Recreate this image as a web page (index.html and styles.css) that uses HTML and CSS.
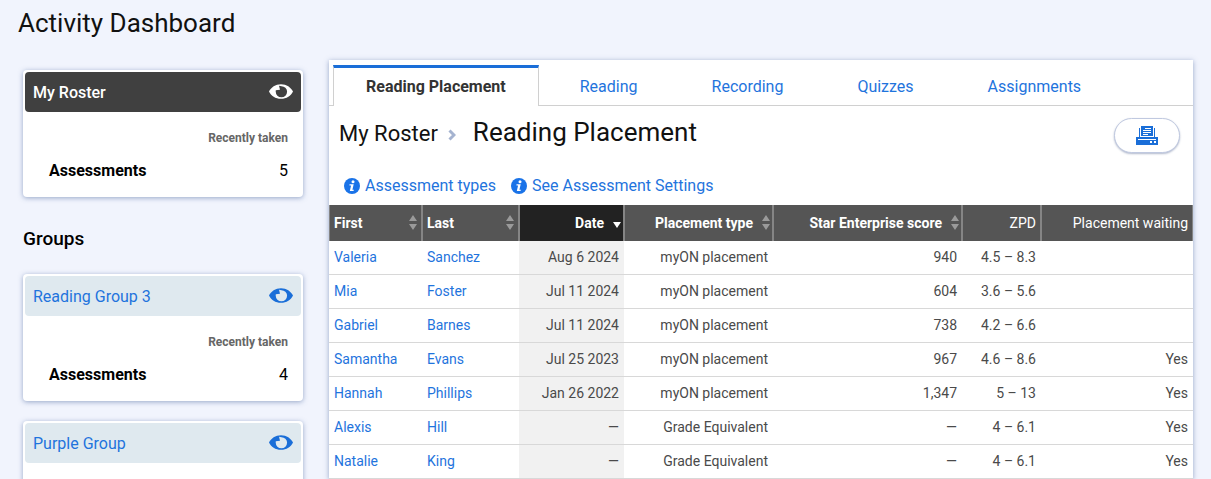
FILE: index.html
```html
<!DOCTYPE html>
<html lang="en">

<head>
  <meta charset="UTF-8">
  <meta name="viewport" content="width=device-width, initial-scale=1.0">
  <title>Activity Dashboard</title>
  <link rel="stylesheet" href="styles.css">
</head>

<body>
  <!-- shared icons -->
  <svg class="sprite" aria-hidden="true">
    <symbol id="eye" viewBox="0 0 24 16">
      <path fill-rule="evenodd" d="M0 7.500C2 3.300 6.500 .2 12 .2S22 3.300 24 7.500c-2 4.400-6.500 7.300-12 7.300S2 11.900 0 7.500zM12.500 2.200L10 1.800 11 5.800 6.800 6.200C6.700 6.700 6.700 7.100 6.700 7.600a5.700 5.700 0 1 0 11.400 0a5.600 5.600 0 0 0-5.600-5.400z"/>
    </symbol>
    <symbol id="info" viewBox="0 0 16 16">
      <circle cx="8" cy="8" r="8" fill="#1a73e8"/>
      <circle cx="9" cy="3.700" r="1.500" fill="#fff"/>
      <path d="M5.500 6.300h4.200l-1.300 5.500h1.500l-.4 1.300H5.800l1.300-5.500H5.500z" fill="#fff"/>
    </symbol>
    <symbol id="sort" viewBox="0 0 8 16">
      <path d="M4 0l4 6H0zM4 15l4-6H0z"/>
    </symbol>
  </svg>

  <h1 class="page-title">Activity Dashboard</h1>

  <div class="layout">
    <aside class="sidebar">
      <section class="card">
        <a href="#" class="card-head active">My Roster
          <svg class="eye"><use href="#eye"/></svg>
        </a>
        <div class="card-body">
          <p class="recent">Recently taken</p>
          <p class="stat"><b>Assessments</b><span>5</span></p>
        </div>
      </section>

      <h2 class="groups-title">Groups</h2>

      <section class="card">
        <a href="#" class="card-head">Reading Group 3
          <svg class="eye"><use href="#eye"/></svg>
        </a>
        <div class="card-body">
          <p class="recent">Recently taken</p>
          <p class="stat"><b>Assessments</b><span>4</span></p>
        </div>
      </section>

      <section class="card">
        <a href="#" class="card-head">Purple Group
          <svg class="eye"><use href="#eye"/></svg>
        </a>
        <div class="card-body"></div>
      </section>
    </aside>

    <main class="panel">
      <nav class="tabs">
        <a href="#" class="tab current">Reading Placement</a>
        <a href="#" class="tab">Reading</a>
        <a href="#" class="tab">Recording</a>
        <a href="#" class="tab">Quizzes</a>
        <a href="#" class="tab">Assignments</a>
      </nav>

      <div class="heading">
        <span class="crumb">My Roster</span>
        <svg class="chevron" viewBox="0 0 8 12"><path d="M1.500 1.500L6 6l-4.500 4.500"/></svg>
        <h2>Reading Placement</h2>
        <button class="print-btn" aria-label="Print">
          <svg viewBox="0 0 22 19" shape-rendering="crispEdges">
            <path fill="#1a6ed8" d="M5 0h12v10H5zM3 2h1v9H3zM18 2h1v9h-1zM0 11h22v8H0z"/>
            <path fill="#fff" d="M9 2h6v1H9zM7 4h8v1H7zM7 6h8v1H7zM7 8h5v1H7zM2 13h18v1H2zM14 15h2v2h-2zM18 15h2v2h-2z"/>
          </svg>
        </button>
      </div>

      <div class="info-links">
        <a href="#"><svg><use href="#info"/></svg>Assessment types</a>
        <a href="#"><svg><use href="#info"/></svg>See Assessment Settings</a>
      </div>

      <table>
        <colgroup>
          <col class="c-first">
          <col class="c-last">
          <col class="c-date">
          <col class="c-type">
          <col class="c-score">
          <col class="c-zpd">
          <col class="c-wait">
        </colgroup>
        <thead>
          <tr>
            <th class="left"><span class="th-in">First<svg class="sort"><use href="#sort"/></svg></span></th>
            <th class="left"><span class="th-in">Last<svg class="sort"><use href="#sort"/></svg></span></th>
            <th class="sorted"><span class="th-in">Date<svg class="down" viewBox="0 0 8 10"><path d="M0 4h8L4 10z"/></svg></span></th>
            <th><span class="th-in">Placement type<svg class="sort"><use href="#sort"/></svg></span></th>
            <th><span class="th-in">Star Enterprise score<svg class="sort"><use href="#sort"/></svg></span></th>
            <th class="plain">ZPD</th>
            <th class="plain">Placement waiting</th>
          </tr>
        </thead>
        <tbody>
          <tr>
            <td><a href="#">Valeria</a></td>
            <td><a href="#">Sanchez</a></td>
            <td>Aug 6 2024</td>
            <td>myON placement</td>
            <td>940</td>
            <td>4.5 – 8.3</td>
            <td></td>
          </tr>
          <tr>
            <td><a href="#">Mia</a></td>
            <td><a href="#">Foster</a></td>
            <td>Jul 11 2024</td>
            <td>myON placement</td>
            <td>604</td>
            <td>3.6 – 5.6</td>
            <td></td>
          </tr>
          <tr>
            <td><a href="#">Gabriel</a></td>
            <td><a href="#">Barnes</a></td>
            <td>Jul 11 2024</td>
            <td>myON placement</td>
            <td>738</td>
            <td>4.2 – 6.6</td>
            <td></td>
          </tr>
          <tr>
            <td><a href="#">Samantha</a></td>
            <td><a href="#">Evans</a></td>
            <td>Jul 25 2023</td>
            <td>myON placement</td>
            <td>967</td>
            <td>4.6 – 8.6</td>
            <td>Yes</td>
          </tr>
          <tr>
            <td><a href="#">Hannah</a></td>
            <td><a href="#">Phillips</a></td>
            <td>Jan 26 2022</td>
            <td>myON placement</td>
            <td>1,347</td>
            <td>5 – 13</td>
            <td>Yes</td>
          </tr>
          <tr>
            <td><a href="#">Alexis</a></td>
            <td><a href="#">Hill</a></td>
            <td>—</td>
            <td>Grade Equivalent</td>
            <td>—</td>
            <td>4 – 6.1</td>
            <td>Yes</td>
          </tr>
          <tr>
            <td><a href="#">Natalie</a></td>
            <td><a href="#">King</a></td>
            <td>—</td>
            <td>Grade Equivalent</td>
            <td>—</td>
            <td>4 – 6.1</td>
            <td>Yes</td>
          </tr>
        </tbody>
      </table>
    </main>
  </div>
</body>

</html>
```
FILE: styles.css
```css
:root {
  --blue: #1f74dd;
  --shadow: 0 1px 5px rgba(60, 90, 150, 0.5);
}

* {
  margin: 0;
  padding: 0;
  box-sizing: border-box;
}

body {
  display: flex;
  flex-direction: column;
  height: 100vh;
  overflow: hidden;
  background: #f1f4fd;
  color: #000;
  font-family: Roboto, "Liberation Sans", sans-serif;
  font-size: 16px;
}

a {
  color: var(--blue);
  text-decoration: none;
}

.sprite {
  display: none;
}

.page-title {
  padding: 8px 18px 0;
  color: #111;
  font-size: 26px;
  line-height: 30px;
  font-weight: 400;
}

.layout {
  display: flex;
  flex: 1;
  gap: 26px;
  min-height: 0;
  padding: 22px 18px 0 23px;
}

/* sidebar */

.sidebar {
  flex: 0 0 280px;
  padding-top: 10px;
}

.card {
  margin-bottom: 20px;
  padding: 2px;
  border-radius: 4px;
  background: #fff;
  box-shadow: var(--shadow);
}

.card-head {
  display: flex;
  align-items: center;
  justify-content: space-between;
  height: 40px;
  padding: 0 8px;
  border-radius: 4px;
  background: #dfe9ef;
}

.card-head.active {
  background: #404040;
  color: #fff;
  font-weight: 500;
}

.eye {
  width: 24px;
  height: 16px;
  fill: #1a6ed8;
}

.active .eye {
  fill: #fff;
}

.card-body {
  height: 83px;
  padding: 17px 13px 0 24px;
}

.recent {
  color: #666;
  font-size: 12px;
  line-height: 18px;
  font-weight: 700;
  text-align: right;
}

.stat {
  display: flex;
  justify-content: space-between;
  margin-top: 14px;
  line-height: 20px;
}

.stat b {
  font-weight: 700;
}

.groups-title {
  padding: 10px 0 24px;
  font-size: 19px;
  line-height: 23px;
  font-weight: 500;
}

/* main panel */

.panel {
  flex: 1;
  padding-top: 5px;
  background: #fff;
  box-shadow: var(--shadow);
}

.tabs {
  display: flex;
  height: 41px;
  padding-left: 4px;
  border-bottom: 1px solid #d0d0d0;
}

.tab {
  height: 41px;
  padding: 0 36px;
  border: 1px solid transparent;
  border-bottom: 0;
  line-height: 41px;
}

.tab.current {
  margin-right: 4px;
  padding: 0 32px;
  border-color: #d0d0d0;
  border-top: 3px solid #1a6ed8;
  background: #fff;
  color: #333;
  font-weight: 700;
  line-height: 37px;
}

.heading {
  display: flex;
  align-items: baseline;
  height: 60px;
  padding: 10px 13px 0 10px;
  color: #111;
}

.crumb {
  font-size: 22px;
  font-weight: 400;
}

.chevron {
  width: 8px;
  height: 12px;
  margin: 0 17px 0 10px;
  fill: none;
  stroke: #a5b3d0;
  stroke-width: 3;
}

.heading h2 {
  font-size: 26px;
  line-height: 32px;
  font-weight: 400;
}

.print-btn {
  display: flex;
  align-items: center;
  justify-content: center;
  align-self: flex-start;
  width: 66px;
  height: 35px;
  margin: 2px 0 0 auto;
  border: 1px solid #c0c9e0;
  border-radius: 18px;
  background: #fff;
  box-shadow: 0 1px 2px rgba(60, 80, 130, 0.4);
}

.print-btn svg {
  width: 22px;
  height: 19px;
}

.info-links {
  display: flex;
  gap: 15px;
  height: 39px;
  padding: 0 15px;
}

.info-links a {
  display: flex;
  align-items: center;
  gap: 5px;
}

.info-links svg {
  width: 16px;
  height: 16px;
}

/* table */

table {
  width: 100%;
  table-layout: fixed;
  border-collapse: separate;
  border-spacing: 0;
  font-size: 14px;
}

.c-first { width: 93px; }
.c-last { width: 97px; }
.c-date { width: 105px; }
.c-type { width: 149px; }
.c-score { width: 189px; }
.c-zpd { width: 79px; }
.c-wait { width: 152px; }

th {
  height: 36px;
  padding: 0 3px 1px 5px;
  background: #555;
  color: #fff;
  font-weight: 700;
  text-align: right;
  white-space: nowrap;
  box-shadow: inset 1px 0 #858585, inset -1px 0 #858585;
}

th.left {
  padding-right: 5px;
  text-align: left;
}

th.plain {
  padding-right: 5px;
  font-weight: 400;
}

th.sorted {
  background: #222;
}

.th-in {
  display: flex;
  align-items: center;
  justify-content: flex-end;
  gap: 9px;
}

.left .th-in {
  justify-content: space-between;
}

.sort {
  width: 8px;
  height: 18px;
  fill: #9a9a9a;
}

.down {
  width: 8px;
  height: 10px;
  fill: #fff;
}

td {
  height: 34px;
  padding: 0 5px 2px;
  border-bottom: 1px solid #d8d8d8;
  color: #4a4a4a;
  text-align: right;
}

td:nth-child(-n+2) {
  text-align: left;
}

td:nth-child(3) {
  background: #f1f1f1;
}
```
